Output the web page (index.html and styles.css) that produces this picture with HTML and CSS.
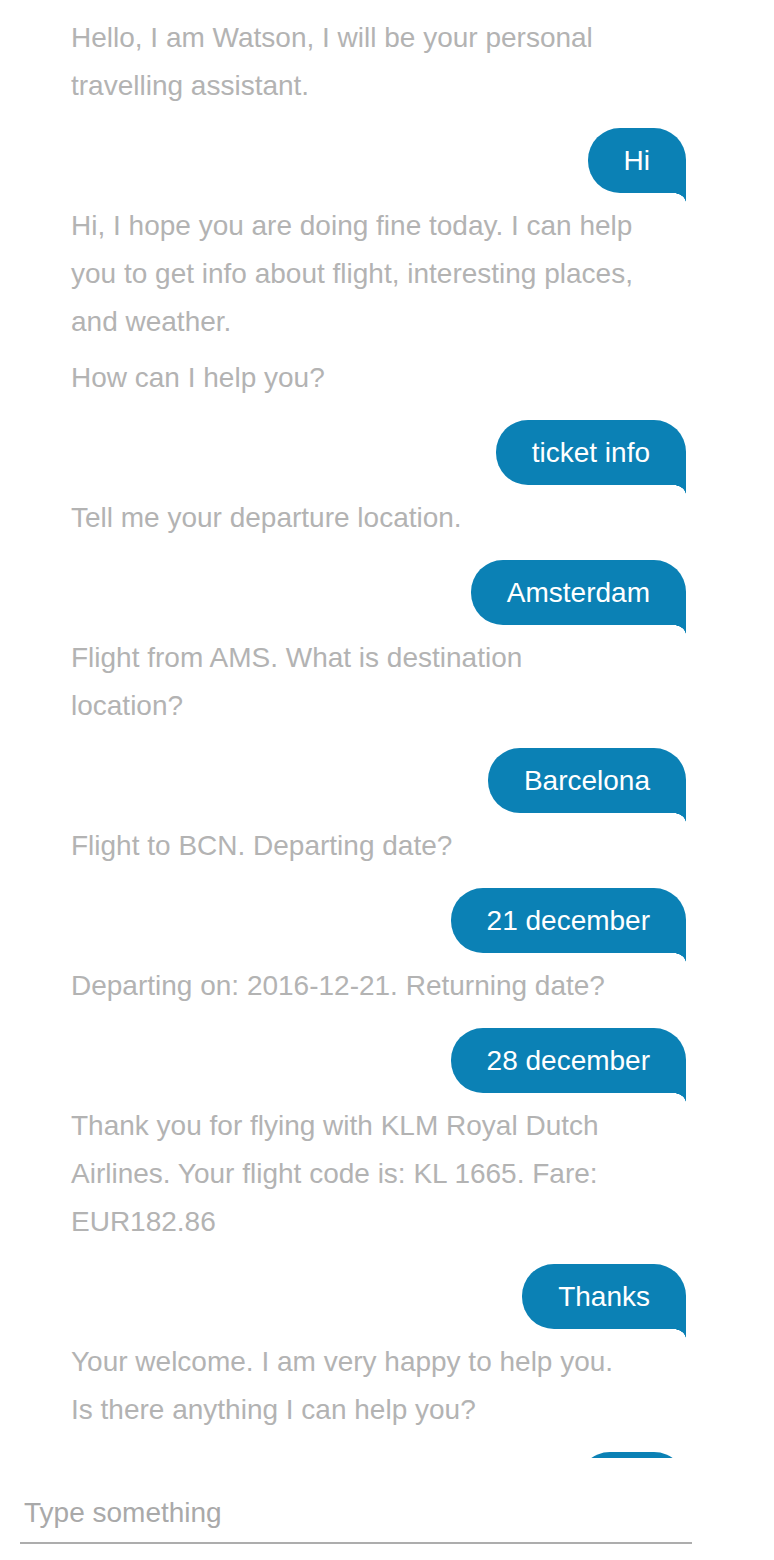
FILE: index.html
```html
<!DOCTYPE html>
<html lang="en">
<head>
<meta charset="utf-8">
<title>Watson travel assistant</title>
<link rel="stylesheet" href="styles.css">
</head>
<body>
<div class="app">
  <div class="chat">
    <div class="bot">
      <p>Hello, I am Watson, I will be your personal travelling assistant.</p>
    </div>
    <div class="user"><span class="bubble">Hi</span></div>
    <div class="bot">
      <p>Hi, I hope you are doing fine today. I can help you to get info about flight, interesting places, and weather.</p>
      <p>How can I help you?</p>
    </div>
    <div class="user"><span class="bubble">ticket info</span></div>
    <div class="bot">
      <p>Tell me your departure location.</p>
    </div>
    <div class="user"><span class="bubble">Amsterdam</span></div>
    <div class="bot">
      <p>Flight from AMS. What is destination location?</p>
    </div>
    <div class="user"><span class="bubble">Barcelona</span></div>
    <div class="bot">
      <p>Flight to BCN. Departing date?</p>
    </div>
    <div class="user"><span class="bubble">21 december</span></div>
    <div class="bot">
      <p>Departing on: 2016-12-21. Returning date?</p>
    </div>
    <div class="user"><span class="bubble">28 december</span></div>
    <div class="bot">
      <p>Thank you for flying with KLM Royal Dutch Airlines. Your flight code is: KL 1665. Fare: EUR182.86</p>
    </div>
    <div class="user"><span class="bubble">Thanks</span></div>
    <div class="bot">
      <p>Your welcome. I am very happy to help you. Is there anything I can help you?</p>
    </div>
    <div class="user"><span class="bubble">No</span></div>
  </div>
  <div class="composer">
    <input class="input" type="text" placeholder="Type something">
  </div>
</div>
</body>
</html>
```
FILE: styles.css
```css
html, body {
  margin: 0;
  padding: 0;
  background: #ffffff;
}

body {
  font-family: "Liberation Sans", Arial, Helvetica, sans-serif;
  font-size: 28px;
}

.chat {
  height: 1458px;
  overflow: hidden;
  box-sizing: border-box;
  padding: 14px 88px 0 71px;
}

.bot p {
  margin: 0;
  max-width: 566px;
  line-height: 48px;
  color: #b3b3b3;
}

.bot p + p {
  margin-top: 8px;
}

.user {
  display: flex;
  justify-content: flex-end;
  margin: 18px 0 9px;
}

.bubble {
  position: relative;
  display: block;
  height: 65px;
  line-height: 65px;
  padding: 0 36px;
  background: #0b81b5;
  color: #ffffff;
  border-radius: 32px 32px 0 32px;
  white-space: nowrap;
}

.bubble::after {
  content: "";
  position: absolute;
  right: 0;
  bottom: -10px;
  width: 13px;
  height: 10px;
  background: radial-gradient(ellipse 13px 10px at 0 100%, transparent 97%, #0b81b5 100%);
}

.composer {
  padding: 26px 0 0 20px;
}

.input {
  display: block;
  box-sizing: border-box;
  width: 672px;
  height: 60px;
  margin: 0;
  padding: 0 4px;
  border: 0;
  border-bottom: 2px solid #adadad;
  outline: none;
  background: transparent;
  font-family: "Liberation Sans", Arial, Helvetica, sans-serif;
  font-size: 28px;
  color: #555555;
}

.input::placeholder {
  color: #a9a9a9;
  opacity: 1;
}
```
